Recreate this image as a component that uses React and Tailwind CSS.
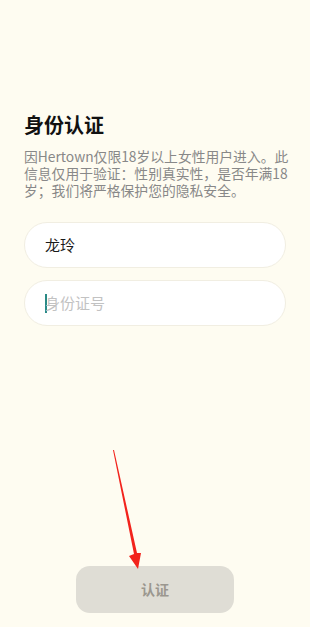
import React from 'react';

const font = { fontFamily: '"Noto Sans CJK SC", "Noto Sans", sans-serif' };

export default function App() {
  return (
    <div className="relative min-h-[627px] w-[310px] bg-[#fefcf1] flex flex-col" style={font}>
      <div className="pl-6 pr-4 pt-[111px]">
        <h1 className="text-[20px] font-bold leading-[28px] text-[#111]">身份认证</h1>
        <p className="mt-[9px] text-[13.8px] leading-[17px] text-[#888] whitespace-nowrap">
          因Hertown仅限18岁以上女性用户进入。此<br />
          信息仅用于验证：性别真实性，是否年满18<br />
          岁；我们将严格保护您的隐私安全。
        </p>
      </div>

      <div className="px-6 mt-[23px] flex flex-col gap-3">
        <div className="h-[46px] rounded-full bg-white border border-[#f1eee2] flex items-center pl-5">
          <span className="text-[15px] text-[#1a1a1a]">龙玲</span>
        </div>
        <div className="h-[46px] rounded-full bg-white border border-[#f1eee2] flex items-center pl-5">
          <span className="w-[2px] h-[19px] bg-[#2a8a86] -mr-[2px]" />
          <span className="text-[15px] text-[#c2c2c2]">身份证号</span>
        </div>
      </div>

      <div className="flex-1" />

      <div className="flex justify-center pb-[14px]">
        <button className="w-[158px] h-[47px] rounded-[14px] bg-[#dfddd5] text-[14px] font-bold text-[#9b978f]">
          认证
        </button>
      </div>

      <svg className="absolute left-0 top-0 pointer-events-none" width="310" height="627" viewBox="0 0 310 627">
        <polygon
          points="113,450 134,554 129,556 138,569 141,553 137,553 114,450"
          fill="#f2231c"
        />
      </svg>
    </div>
  );
}
